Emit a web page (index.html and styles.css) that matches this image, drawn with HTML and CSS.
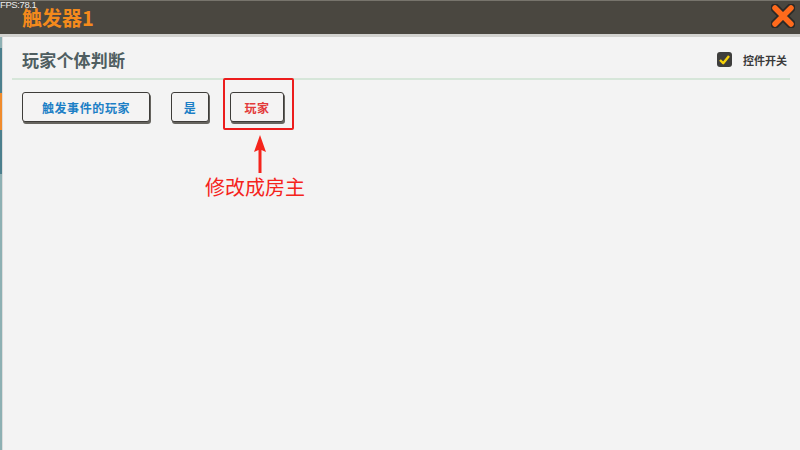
FILE: index.html
```html
<!DOCTYPE html>
<html lang="zh-CN">
<head>
<meta charset="utf-8">
<title>触发器1</title>
<link rel="stylesheet" href="styles.css">
</head>
<body>
<div class="app">
  <header class="topbar">
    <span class="fps">FPS:78.1</span>
    <h1 class="title">触发器1</h1>
    <span class="close">
      <svg width="24" height="24" viewBox="0 0 24 24">
        <path d="M4 4 L20 20 M20 4 L4 20" stroke="#2b2a27" stroke-width="9" stroke-linecap="round"/>
        <path d="M4 4 L20 20 M20 4 L4 20" stroke="#ff6a1c" stroke-width="5.5" stroke-linecap="round"/>
      </svg>
    </span>
  </header>
  <div class="body">
    <div class="strip">
      <i class="seg light s1"></i>
      <i class="seg teal s2"></i>
      <i class="seg orange s3"></i>
      <i class="seg teal s4"></i>
      <i class="seg light s5"></i>
    </div>
    <main class="panel">
      <div class="section-head">
        <h2 class="section-title">玩家个体判断</h2>
        <label class="toggle">
          <span class="check">
            <svg width="11" height="10" viewBox="0 0 11 10">
              <path d="M1 5 L4.2 8.2 L10 1" fill="none" stroke="#f6d20a" stroke-width="2.4" stroke-linejoin="round"/>
            </svg>
          </span>
          控件开关
        </label>
      </div>
      <div class="row">
        <span class="btn btn-wide blue">触发事件的玩家</span>
        <span class="btn btn-narrow blue">是</span>
        <div class="annotated">
          <span class="btn btn-mid red">玩家</span>
          <span class="highlight"></span>
          <div class="note">
            <svg class="arrow" width="14" height="41" viewBox="0 0 14 41">
              <path d="M7 0 L13 17 L8.5 15 L8.5 38 L5.5 38 L5.5 15 L1 17 Z" fill="#f5241c"/>
            </svg>
            <span class="note-text">修改成房主</span>
          </div>
        </div>
      </div>
    </main>
  </div>
</div>
</body>
</html>
```

FILE: styles.css
```css
* { box-sizing: border-box; }
html, body { margin: 0; padding: 0; }
body {
  width: 800px;
  height: 450px;
  overflow: hidden;
  background: #f3f3f3;
  font-family: "Noto Sans CJK SC", "Noto Sans", sans-serif;
}
.app {
  width: 800px;
  height: 450px;
  display: flex;
  flex-direction: column;
}
.topbar {
  position: relative;
  height: 37px;
  flex: none;
  background: #4a4740;
  border-top: 1px solid #77746c;
  border-bottom: 3px solid #d2d2cf;
  display: flex;
  align-items: center;
  padding: 0 5px 0 22px;
}
.fps {
  position: absolute;
  left: 0;
  top: -1px;
  font-family: "Liberation Sans", sans-serif;
  font-size: 9.5px;
  line-height: 9px;
  color: #ececec;
  letter-spacing: -0.4px;
}
.title {
  margin: 0;
  font-size: 20px;
  font-weight: 700;
  line-height: 18px;
  color: #f48a1c;
  flex: 1;
}
.close {
  display: flex;
  margin-top: -3px;
}
.body {
  flex: 1;
  display: flex;
}
.strip {
  width: 3px;
  flex: none;
  display: flex;
  flex-direction: column;
  border-right: 1px solid #dcdcdc;
}
.seg { display: block; width: 2px; }
.light { background: #8db0b3; }
.teal { background: #4b7f8d; }
.orange { background: #f08b2c; }
.s1 { height: 11px; }
.s2 { height: 45px; }
.s3 { height: 37px; }
.s4 { height: 44px; }
.s5 { flex: 1; }
.panel {
  flex: 1;
  padding: 0 10px 0 9px;
  background: #f3f3f3;
}
.section-head {
  height: 43px;
  padding: 4px 3px 0 10px;
  display: flex;
  align-items: center;
  justify-content: space-between;
  border-bottom: 2px solid #d6e6d9;
}
.section-title {
  margin: 0;
  font-size: 17px;
  font-weight: 700;
  color: #4f5e61;
  letter-spacing: 0.2px;
}
.toggle {
  display: flex;
  align-items: center;
  gap: 11px;
  font-size: 11px;
  font-weight: 700;
  color: #3a3a3a;
}
.check {
  width: 15px;
  height: 15px;
  border-radius: 3px;
  background: #3e3e3c;
  display: flex;
  align-items: center;
  justify-content: center;
}
.row {
  margin-top: 12px;
  padding-left: 10px;
  display: flex;
  gap: 21px;
}
.btn {
  height: 30px;
  display: flex;
  align-items: center;
  justify-content: center;
  background: #f4f3f3;
  border: 1.5px solid #3e3c39;
  border-radius: 3px;
  box-shadow: 1px 2px 0 #66645f;
  font-size: 12px;
  font-weight: 700;
  letter-spacing: 0.6px;
}
.btn-wide { width: 128px; }
.btn-narrow { width: 38px; }
.btn-mid { width: 54px; }
.blue { color: #1c7fc6; }
.red { color: #e33a3a; }
.annotated {
  position: relative;
}
.highlight {
  position: absolute;
  left: -7px;
  top: -14px;
  width: 71px;
  height: 52px;
  border: 2px solid #ec1c1c;
  border-radius: 2px;
}
.note {
  position: absolute;
  left: -25px;
  top: 43px;
  width: 100px;
  display: flex;
  flex-direction: column;
  align-items: center;
}
.arrow {
  margin-left: 10px;
}
.note-text {
  font-size: 20px;
  line-height: 22px;
  color: #f5241c;
  white-space: nowrap;
}
```
